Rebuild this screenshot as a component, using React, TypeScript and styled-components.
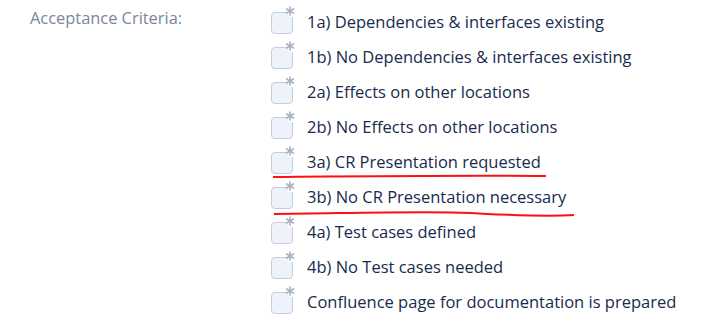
import React from 'react'
import styled, { createGlobalStyle } from 'styled-components'

const GlobalStyle = createGlobalStyle`
  html, body {
    margin: 0;
    padding: 0;
    background: #ffffff;
  }
  body {
    font-family: 'Open Sans', 'Noto Sans', sans-serif;
  }
`

const criteria = [
  '1a) Dependencies & interfaces existing',
  '1b) No Dependencies & interfaces existing',
  '2a) Effects on other locations',
  '2b) No Effects on other locations',
  '3a) CR Presentation requested',
  '3b) No CR Presentation necessary',
  '4a) Test cases defined',
  '4b) No Test cases needed',
  'Confluence page for documentation is prepared'
]

const Field = styled.div`
  position: relative;
  display: flex;
  align-items: flex-start;
  width: 714px;
  height: 327px;
  padding-top: 4px;
  box-sizing: border-box;
`

const Label = styled.div`
  width: 241px;
  padding-left: 30px;
  padding-top: 2px;
  font-size: 16.4px;
  color: #7a869a;
`

const List = styled.ul`
  list-style: none;
  margin: 0;
  padding: 0;
  display: flex;
  flex-direction: column;
`

const Item = styled.li`
  display: flex;
  align-items: center;
  height: 35px;
  gap: 14px;
`

const Check = styled.span`
  position: relative;
  display: inline-block;
  width: 22px;
  height: 22px;
  margin-top: 3px;
  border: 1.5px solid #c3cddd;
  border-radius: 4px;
  background: #eef2fa;
  box-sizing: border-box;

  &::after {
    content: '';
    position: absolute;
    right: -4px;
    top: -4px;
    width: 8px;
    height: 8px;
    background: #ffffff;
  }
`

const Star = styled.svg`
  position: absolute;
  right: -3px;
  top: -7px;
  z-index: 1;
`

const Text = styled.span`
  font-size: 16.5px;
  color: #172b4d;
`

const Marks = styled.svg`
  position: absolute;
  left: 0;
  top: 0;
  pointer-events: none;
`

const Asterisk = (): JSX.Element => (
  <Star width='10' height='10' viewBox='0 0 10 10'>
    <g stroke='#a9b3c4' strokeWidth='1.7' strokeLinecap='round'>
      <line x1='5' y1='1' x2='5' y2='9' />
      <line x1='1.6' y1='3' x2='8.4' y2='7' />
      <line x1='1.6' y1='7' x2='8.4' y2='3' />
    </g>
  </Star>
)

const App = (): JSX.Element => (
  <>
    <GlobalStyle />
    <Field>
      <Label>Acceptance Criteria:</Label>
      <List>
        {criteria.map((c) => (
          <Item key={c}>
            <Check>
              <Asterisk />
            </Check>
            <Text>{c}</Text>
          </Item>
        ))}
      </List>
      {/* hand-drawn annotation */}
      <Marks width='714' height='327'>
        <path d='M273 177 C 380 176, 470 175, 546 176' stroke='#ff1010' strokeWidth='2' fill='none' />
        <path d='M274 214 C 360 213, 430 211, 470 213 C 510 215, 540 217, 574 215' stroke='#ff1010' strokeWidth='2' fill='none' />
      </Marks>
    </Field>
  </>
)

export default App
